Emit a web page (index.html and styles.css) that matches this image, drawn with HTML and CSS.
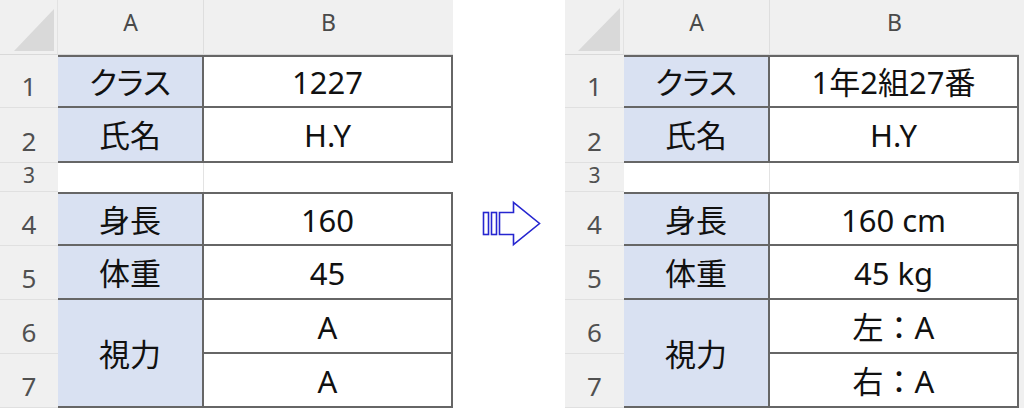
FILE: index.html
```html
<!DOCTYPE html>
<html lang="ja">
<head>
<meta charset="utf-8">
<title>Excel before / after</title>
<link rel="stylesheet" href="styles.css">
</head>
<body>
<div class="page">
  <div class="sheet sheet-left">
    <div class="corner"><div class="tri"></div></div>
    <div class="colhead ca">A</div>
    <div class="colhead cb">B</div>

    <div class="rowhead">1</div>
    <div class="cell key top">クラス</div>
    <div class="cell val top">1227</div>

    <div class="rowhead">2</div>
    <div class="cell key">氏名</div>
    <div class="cell val">H.Y</div>

    <div class="rowhead short">3</div>
    <div class="cell blank blank-a"></div>
    <div class="cell blank blank-b"></div>

    <div class="rowhead">4</div>
    <div class="cell key top">身長</div>
    <div class="cell val top">160</div>

    <div class="rowhead">5</div>
    <div class="cell key">体重</div>
    <div class="cell val">45</div>

    <div class="rowhead">6</div>
    <div class="cell key merged">視力</div>
    <div class="cell val">A</div>

    <div class="rowhead">7</div>
    <div class="cell val">A</div>
  </div>

  <div class="arrow-wrap">
    <svg class="arrow" width="62" height="50" viewBox="0 0 62 50">
      <rect x="3.5" y="12.5" width="5" height="22" />
      <rect x="11.5" y="12.5" width="5" height="22" />
      <path d="M19.5 12.5 H33.5 V2.5 L59.5 23.5 L33.5 44.5 V34.5 H19.5 Z" />
    </svg>
  </div>

  <div class="sheet sheet-right">
    <div class="corner"><div class="tri"></div></div>
    <div class="colhead ca">A</div>
    <div class="colhead cb">B</div>

    <div class="rowhead">1</div>
    <div class="cell key top">クラス</div>
    <div class="cell val top">1年2組27番</div>

    <div class="rowhead">2</div>
    <div class="cell key">氏名</div>
    <div class="cell val">H.Y</div>

    <div class="rowhead short">3</div>
    <div class="cell blank blank-a"></div>
    <div class="cell blank blank-b"></div>

    <div class="rowhead">4</div>
    <div class="cell key top">身長</div>
    <div class="cell val top">160 cm</div>

    <div class="rowhead">5</div>
    <div class="cell key">体重</div>
    <div class="cell val">45 kg</div>

    <div class="rowhead">6</div>
    <div class="cell key merged">視力</div>
    <div class="cell val">左：A</div>

    <div class="rowhead">7</div>
    <div class="cell val">右：A</div>
  </div>
</div>
</body>
</html>
```

FILE: styles.css
```css
html, body {
  margin: 0;
  padding: 0;
  background: #ffffff;
}

body {
  font-family: "Noto Sans", "Noto Sans CJK JP", sans-serif;
  color: #111;
}

.page {
  display: flex;
  align-items: flex-start;
  width: 1024px;
  height: 417px;
}

.sheet {
  display: grid;
  grid-template-rows: 55px 53px 55px 29px 54px 54px 54px 54px;
  background: #f0f0f0;
}

.sheet-left {
  grid-template-columns: 58px 146px 249px;
}

.sheet-right {
  grid-template-columns: 59px 146px 249px;
  padding-right: 5px;
  margin-left: auto;
}

/* corner */
.corner {
  grid-column: 1;
  display: flex;
  justify-content: flex-end;
  align-items: flex-end;
  padding: 0 3px 3px 0;
  border-bottom: 1px solid #d9d9d9;
  border-right: 1px solid #e2e2e2;
  box-sizing: border-box;
}

.tri {
  width: 40px;
  height: 42px;
  background: #d9d9d9;
  clip-path: polygon(100% 0, 100% 100%, 0 100%);
}

.sheet-right .tri {
  width: 42px;
  height: 43px;
}

/* column headers */
.colhead {
  display: flex;
  justify-content: center;
  align-items: flex-start;
  padding-top: 11px;
  box-sizing: border-box;
  font-size: 23px;
  line-height: 1;
  color: #4a4a4a;
  border-bottom: 1px solid #d9d9d9;
}

.colhead.ca {
  grid-column: 2;
  border-right: 1px solid #dedede;
}

.colhead.cb {
  grid-column: 3;
}

/* row headers */
.rowhead {
  grid-column: 1;
  display: flex;
  justify-content: center;
  align-items: flex-end;
  padding-bottom: 8px;
  box-sizing: border-box;
  font-size: 26px;
  line-height: 1;
  color: #505050;
  border-bottom: 1px solid #e0e0e0;
}

.rowhead.short {
  align-items: flex-start;
  padding-bottom: 0;
  padding-top: 1px;
  font-size: 21px;
  line-height: 22px;
}

/* data cells */
.cell {
  display: flex;
  justify-content: center;
  align-items: center;
  box-sizing: border-box;
  font-size: 31px;
  line-height: 1;
  color: #111;
  white-space: nowrap;
  padding-top: 2px;
}

.key {
  grid-column: 2;
  background: #d9e1f2;
  border-right: 2px solid #666;
  border-bottom: 2px solid #666;
  font-feature-settings: "palt";
}

.val {
  grid-column: 3;
  background: #ffffff;
  border-right: 2px solid #666;
  border-bottom: 2px solid #666;
}

.top {
  border-top: 2px solid #666;
}

.merged {
  grid-row: span 2;
}

.blank {
  background: #ffffff;
}

.blank-a {
  grid-column: 2;
  border-right: 1px solid #e3e3e3;
}

.blank-b {
  grid-column: 3;
}

/* arrow */
.arrow-wrap {
  width: 112px;
  display: flex;
  justify-content: center;
  padding-top: 200px;
  padding-left: 4px;
  box-sizing: border-box;
}

.arrow rect,
.arrow path {
  fill: #ffffff;
  stroke: #2626d0;
  stroke-width: 1.6;
  stroke-linejoin: miter;
}
```
